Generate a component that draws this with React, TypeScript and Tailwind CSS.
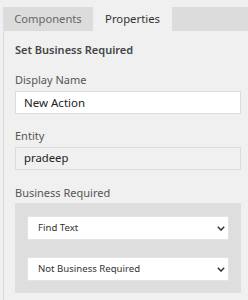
import React from "react";

function Chevron() {
  return (
    <svg width="8" height="5" viewBox="0 0 8 5" className="shrink-0">
      <path d="M0.8 0.8 L4 4 L7.2 0.8" fill="none" stroke="#333" strokeWidth="1.5" />
    </svg>
  );
}

function Select({ label }: { label: string }) {
  return (
    <div className="flex h-[24px] items-center justify-between border border-[#e4e4e4] bg-white pl-[10px] pr-[3px]">
      <span className="text-[9.6px] text-[#333]">{label}</span>
      <Chevron />
    </div>
  );
}

export default function App() {
  return (
    <div
      className="h-[300px] w-[248px] bg-[#f0f0f0] pl-[3px] pt-[7px]"
      style={{ fontFamily: '"Noto Sans", "Open Sans", sans-serif' }}
    >
      <div className="flex h-[24px] bg-[#dcdcdc]">
        <div className="flex w-[90px] items-center justify-center text-[11.2px] text-[#666]">Components</div>
        <div className="flex w-[79px] items-center justify-center bg-[#f0f0f0] text-[11.3px] text-[#333]">Properties</div>
      </div>
      <div className="h-[269px] border-l border-[#dadada] pl-[11px] pr-[7px]">
        <div className="pt-[10px] text-[11px] font-semibold leading-[18px] text-[#444]">Set Business Required</div>
        <div className="mt-[12px] text-[11px] leading-[18px] text-[#555]">Display Name</div>
        <div className="mt-[2px] flex h-[23px] items-center border border-[#dcdcdc] bg-white pl-[8px] text-[11.5px] text-[#222]">New Action</div>
        <div className="mt-[13px] text-[11px] leading-[18px] text-[#555]">Entity</div>
        <div className="mt-[2px] flex h-[23px] items-center border border-[#dcdcdc] bg-[#f0f0f0] pl-[8px] text-[11.3px] text-[#222]">pradeep</div>
        <div className="mt-[14px] text-[11px] leading-[18px] text-[#555]">Business Required</div>
        <div className="mt-[1px] flex h-[90px] flex-col gap-[17px] bg-[#dedede] px-[12px] pt-[13px]">
          <Select label="Find Text" />
          <Select label="Not Business Required" />
        </div>
      </div>
    </div>
  );
}
